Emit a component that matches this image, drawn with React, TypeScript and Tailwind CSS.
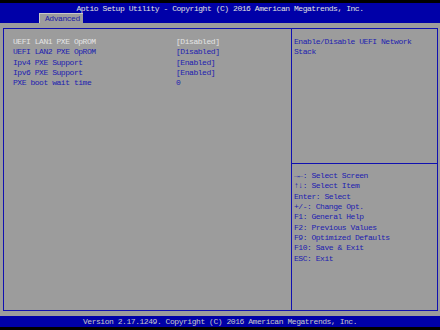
import React from 'react'

type Item = {
  label: string
  value: string
  active?: boolean
}

const items: Item[] = [
  { label: 'UEFI LAN1 PXE OpROM', value: '[Disabled]', active: true },
  { label: 'UEFI LAN2 PXE OpROM', value: '[Disabled]' },
  { label: 'Ipv4 PXE Support', value: '[Enabled]' },
  { label: 'Ipv6 PXE Support', value: '[Enabled]' },
  { label: 'PXE boot wait time', value: '0' },
]

const keys = [
  { k: '\u2192\u2190', d: ': Select Screen', arrow: true },
  { k: '\u2191\u2193', d: ': Select Item', arrow: true },
  { k: 'Enter', d: ': Select' },
  { k: '+/-', d: ': Change Opt.' },
  { k: 'F1', d: ': General Help' },
  { k: 'F2', d: ': Previous Values' },
  { k: 'F9', d: ': Optimized Defaults' },
  { k: 'F10', d: ': Save & Exit' },
  { k: 'ESC', d: ': Exit' },
]

export default function App() {
  return (
    <div
      className="w-[440px] h-[330px] bg-black flex flex-col text-[8px] tracking-[-0.45px] leading-[10.33px] overflow-hidden"
      style={{ fontFamily: '"Liberation Mono", "DejaVu Sans Mono", monospace' }}
    >
      <div className="h-[3px]" />

      {/* header */}
      <div className="h-[20px] bg-[#0000a8] flex flex-col">
        <div className="h-[10px] text-center text-[#e0e0e0] pt-[1px] leading-[9px]">
          Aptio Setup Utility - Copyright (C) 2016 American Megatrends, Inc.
        </div>
        <div className="h-[10px] pl-[39px] flex">
          <div className="w-[44px] h-[10px] bg-[#9c9c9c] text-[#2020a8] pl-[5px] leading-[10px] border-t border-l border-[#c8c8c8]">
            Advanced
          </div>
        </div>
      </div>

      {/* body */}
      <div className="flex-1 bg-[#9c9c9c] pt-[5px] pb-[5px] pl-[3px] pr-[2px] flex">
        <div className="flex-1 border border-[#1010b0] flex">
          <div className="w-[288px] border-r border-[#1010b0] pt-[8px] pl-[9px]">
            {items.map((item) => (
              <div key={item.label} className="flex h-[10.33px]">
                <div
                  className={`w-[163px] ${
                    item.active ? 'text-[#e4e4e4]' : 'text-[#1c1cb0]'
                  }`}
                >
                  {item.label}
                </div>
                <div
                  className={
                    item.active ? 'text-[#e4e4e4]' : 'text-[#1c1cb0]'
                  }
                >
                  {item.value}
                </div>
              </div>
            ))}
          </div>

          <div className="flex-1 flex flex-col">
            <div className="h-[135px] border-b border-[#1010b0] pt-[8px] pl-[2px] text-[#1c1cb0]">
              <div>Enable/Disable UEFI Network</div>
              <div>Stack</div>
            </div>
            <div className="pt-[7px] pl-[2px] text-[#1c1cb0]">
              {keys.map((row) => (
                <div key={row.k}>
                  <span className={row.arrow ? 'font-bold' : ''}>{row.k}</span>
                  {row.d}
                </div>
              ))}
            </div>
          </div>
        </div>
      </div>

      {/* footer */}
      <div className="h-[11px] bg-[#0000a8] text-center text-[#c8c8c8] leading-[11px]">
        Version 2.17.1249. Copyright (C) 2016 American Megatrends, Inc.
      </div>
      <div className="h-[3px]" />
    </div>
  )
}
